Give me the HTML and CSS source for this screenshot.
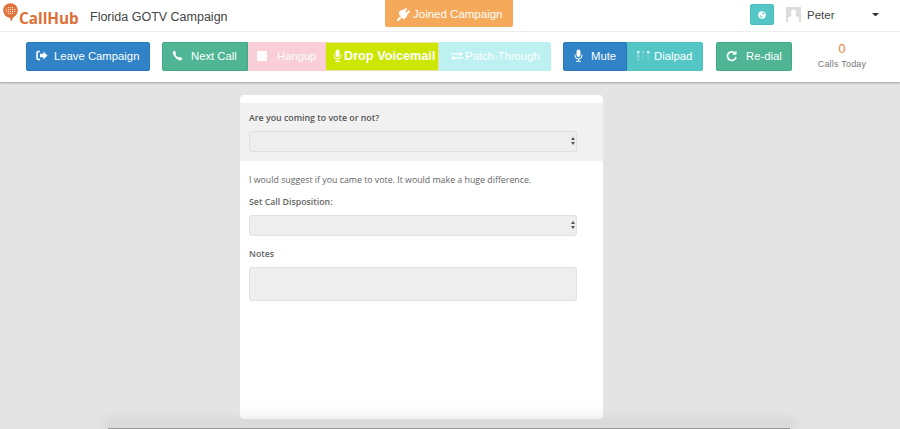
FILE: index.html
```html
<!DOCTYPE html>
<html lang="en">
<head>
<meta charset="utf-8">
<title>CallHub - Florida GOTV Campaign</title>
<link rel="stylesheet" href="styles.css">
</head>
<body>
<div class="top">
  <header class="header">
    <div class="brand">
      <div class="logo">
        <svg class="logo-mark" width="15" height="20" viewBox="0 0 15 20"><circle cx="7.500" cy="7.500" r="7.300" fill="#e0703a"/><path d="M5.500 13l5-1c-.3 2.500-1 5-2.800 6.800.4-2-.4-3.800-2.200-5.800z" fill="#e0703a"/><path d="M4 3.500h7v8H4zM2.800 5.500h9.400v4H2.800z" fill="#f7d5c0"/><path d="M2.500 5.500h10M2.500 7.500h10M2.500 9.500h10M4 3.500h7M4 11.500h7M4.500 3v9M6.500 2.500v10M8.500 2.500v10M10.500 3v9" stroke="#e0703a" stroke-width=".8" fill="none"/></svg>
        <span class="logo-text">CallHub</span>
      </div>
      <span class="campaign">Florida GOTV Campaign</span>
    </div>
    <div class="joined">
      <svg width="14" height="14" viewBox="0 0 14 14"><path d="M1 13l2.500-2.500M3 7l4 4 1.500-1.500c1-1 1-2.500.5-3.500L7 4C6 3.500 4.500 3.800 3.700 4.700L3 5.500zM6.500 4.500L9 2M9.500 7L12 4.500" stroke="#fff" stroke-width="2" fill="#fff" stroke-linecap="round"/></svg>
      Joined Campaign
    </div>
    <div class="account">
      <div class="globe"><svg width="8" height="8" viewBox="0 0 8 8"><circle cx="4" cy="4" r="3.800" fill="#fff"/><path d="M4.800 1.200l1.500.6-.4 1.700-1.500-.3zM2 4.200l1.500.4.600 1.800-1 .6z" fill="#55c6c6"/></svg></div>
      <div class="avatar"><svg width="15" height="15" viewBox="0 0 15 15"><rect width="15" height="15" fill="#dcdcdc"/><path d="M7.500 2.500a2.800 3.300 0 0 1 2.200 5.200c-.5.800-.2 1.300 1 1.800l2.300 1.100V15H2v-4.400l2.300-1.100c1.200-.5 1.500-1 1-1.800A2.800 3.300 0 0 1 7.500 2.500z" fill="#fff"/></svg></div>
      <span class="user">Peter</span>
      <span class="caret"></span>
    </div>
  </header>
  <nav class="toolbar">
    <button class="btn blue leave">
      <svg width="12" height="11" viewBox="0 0 12 11"><path d="M4 1.500H2.500A1.500 1.500 0 0 0 1 3v5a1.500 1.500 0 0 0 1.500 1.500H4" stroke="#fff" stroke-width="1.600" fill="none"/><path d="M4 3.800h3.500V1.500L11.500 5.500 7.500 9.500V7.200H4z" fill="#fff"/></svg>
      Leave Campaign
    </button>
    <div class="group">
      <button class="btn green next">
        <svg width="11" height="11" viewBox="0 0 11 11"><path d="M2.500.5L4.200 3 3.300 4.200c.5 1.300 1.400 2.200 3.300 3.400l1.100-.9L10.500 8.600 9 10.500C4.500 10 1 6 .7 2z" fill="#fff"/></svg>
        Next Call
      </button>
      <button class="btn pink hangup"><span class="stop"></span>Hangup</button>
      <button class="btn lime voicemail">
        <svg width="9" height="13" viewBox="0 0 9 13"><rect x="2.500" y="0.500" width="4" height="7.500" rx="2" fill="#fff"/><path d="M1 5.500v1a3.500 3.500 0 0 0 7 0v-1M4.500 10v2M2 12.300h5" stroke="#fff" stroke-width="1" fill="none"/></svg>
        Drop Voicemail
      </button>
      <button class="btn cyan patch">
        <svg width="12" height="10" viewBox="0 0 12 10"><path d="M0 2.300h8.500V.5L12 3 8.500 5V3.600H0zM12 6.400H3.500V5L0 7l3.500 2.500V7.700H12z" fill="#fff"/></svg>
        Patch-Through
      </button>
    </div>
    <div class="group">
      <button class="btn blue mute">
        <svg width="9" height="13" viewBox="0 0 9 13"><rect x="2.500" y="0.500" width="4" height="7.500" rx="2" fill="#fff"/><path d="M1 5.500v1a3.500 3.500 0 0 0 7 0v-1M4.500 10v2M2 12.300h5" stroke="#fff" stroke-width="1" fill="none"/></svg>
        Mute
      </button>
      <button class="btn teal dialpad">
        <svg width="13" height="10" viewBox="0 0 13 10" fill="#fff"><rect x="0" y="0" width="2.500" height="2.500" opacity=".75"/><rect x="5" y="0" width="2.500" height="2.500" opacity=".25"/><rect x="10" y="0" width="2.500" height="2.500" opacity=".75"/><rect x="0" y="3.700" width="2.500" height="2.500" opacity=".35"/><rect x="5" y="3.700" width="2.500" height="2.500" opacity=".1"/><rect x="10" y="3.700" width="2.500" height="2.500" opacity=".15"/><rect x="0" y="7.300" width="2.500" height="2.500" opacity=".2"/><rect x="5" y="7.300" width="2.500" height="2.500" opacity=".1"/><rect x="10" y="7.300" width="2.500" height="2.500" opacity=".15"/></svg>
        Dialpad
      </button>
    </div>
    <button class="btn green redial">
      <svg width="11" height="12" viewBox="0 0 11 12"><path d="M9 3.300A4.300 4.300 0 1 0 10 7" stroke="#fff" stroke-width="1.700" fill="none"/><path d="M10.500 0.500v4.300H6.200z" fill="#fff"/></svg>
      Re-dial
    </button>
    <div class="today">
      <span class="today-count">0</span>
      <span class="today-label">Calls Today</span>
    </div>
  </nav>
</div>
<main class="stage">
  <form class="card">
    <section class="shaded">
      <label class="label strong" for="vote">Are you coming to vote or not?</label>
      <div class="select-wrap">
        <select id="vote" class="field select"></select>
        <svg class="arrows" width="4" height="8" viewBox="0 0 4 8"><path d="M2 0L4 3H0zM2 8L0 5h4z" fill="#555"/></svg>
      </div>
    </section>
    <section class="plain">
      <p class="script">I would suggest if you came to vote. It would make a huge difference.</p>
      <label class="label disposition" for="disp">Set Call Disposition:</label>
      <div class="select-wrap">
        <select id="disp" class="field select"></select>
        <svg class="arrows" width="4" height="8" viewBox="0 0 4 8"><path d="M2 0L4 3H0zM2 8L0 5h4z" fill="#555"/></svg>
      </div>
      <label class="label notes-label" for="notes">Notes</label>
      <textarea id="notes" class="field notes"></textarea>
    </section>
  </form>
</main>
<div class="edge"></div>
</body>
</html>
```
FILE: styles.css
```css
* { box-sizing: border-box; }
html, body { margin: 0; height: 429px; overflow: hidden; }
body { background: #e4e4e4; font-family: "Liberation Sans", Arial, sans-serif; color: #555; position: relative; }

.top { background: #fff; box-shadow: 0 1px 2px rgba(0,0,0,.3); height: 82px; position: relative; }
.header { height: 32px; display: flex; border-bottom: 1px solid #eee; }
.brand { width: 385px; display: flex; align-items: center; height: 31px; padding-left: 3px; }
.logo { display: flex; align-items: flex-start; width: 87px; height: 31px; padding-top: 3px; }
.logo-text { font-family: "Open Sans", sans-serif; font-weight: 700; font-size: 15.300px; line-height: 20px; color: #dd6f37; margin: 5px 0 0 1px; }
.campaign { font-size: 12.500px; color: #444; position: relative; top: 1px; }
.joined { width: 128px; height: 27px; background: #f5a95a; border-radius: 0 0 2px 2px; color: #fff; font-size: 11.500px; display: flex; align-items: center; justify-content: flex-start; gap: 2px; padding-left: 12px; }
.account { flex: 1; display: flex; align-items: center; height: 29px; padding-left: 237px; }
.globe { width: 24px; height: 21px; background: #55c6c6; border: 1px solid #4dbcbc; border-radius: 2px; display: flex; align-items: center; justify-content: center; }
.avatar { margin-left: 12px; width: 15px; height: 15px; display: flex; }
.user { margin-left: 6px; font-size: 11.500px; color: #444; }
.caret { margin-left: 37px; border: 3px solid transparent; border-top: 3.500px solid #333; border-bottom: 0; width: 7px; height: 4px; }

.toolbar { display: flex; align-items: flex-start; padding: 10px 0 0 26px; }
.group { display: flex; margin-left: 12px; }
.btn { height: 29px; border: 1px solid transparent; padding: 0 0 2px; color: #fff; font-family: inherit; font-size: 11.300px; display: flex; align-items: center; justify-content: flex-start; white-space: nowrap; }
.btn svg { flex: none; }
.blue { background: #2f83c6; border-color: #2a7ab8; }
.green { background: #4fb594; border-color: #43a987; }
.pink { background: #f9ced6; border-color: #f9ced6; }
.lime { background: #cce600; border-color: #f0e0b0; }
.cyan { background: #bdf1f1; border-color: #bdf1f1; }
.teal { background: #55c6c6; border-color: #4fbfbf; }

.leave { width: 124px; padding-left: 9px; gap: 6px; border-radius: 2px; }
.next { width: 86px; padding-left: 9px; gap: 8px; border-radius: 2px 0 0 2px; }
.hangup { width: 78px; padding-left: 8px; gap: 10px; }
.voicemail { width: 113px; padding-left: 6px; gap: 2px; font-size: 12.700px; font-weight: 700; border-left-color: #cce600; }
.patch { width: 112px; padding-left: 11px; gap: 2px; border-radius: 0 2px 2px 0; }
.group + .group { margin-left: 12px; }
.mute { width: 64px; padding-left: 10px; gap: 8px; border-radius: 2px 0 0 2px; }
.dialpad { width: 76px; padding-left: 9px; gap: 4px; border-radius: 0 2px 2px 0; }
.redial { width: 76px; margin-left: 13px; padding-left: 9px; gap: 9px; border-radius: 2px; }
.stop { width: 10px; height: 10px; background: #fff; flex: none; }

.today { width: 100px; display: flex; flex-direction: column; align-items: center; }
.today-count { font-size: 12.500px; line-height: 14px; color: #ee7b3b; }
.today-label { font-size: 9px; line-height: 13px; color: #777; margin-top: 2px; letter-spacing: .2px; }

.stage { display: flex; justify-content: flex-start; padding: 12px 0 0 239px; }
.card { width: 365px; height: 326px; background: linear-gradient(#fff 300px, #fafafa); border: 1px solid #e6e6e6; border-radius: 5px; padding-top: 8px; font-family: "Open Sans", sans-serif; }
.shaded { background: #f1f1f1; height: 58px; padding: 9px 9px 0; }
.plain { padding: 13px 9px 0; }
.label { display: block; font-size: 8.800px; line-height: 13px; color: #444; }
.strong { font-weight: 600; margin-bottom: 6px; color: #555; }
.script { margin: 0 0 9px; font-size: 8.800px; line-height: 13px; color: #666; }
.disposition { font-weight: 600; margin-bottom: 6px; color: #666; }
.notes-label { font-weight: 600; margin-top: 12px; margin-bottom: 6px; color: #666; }
.select-wrap { position: relative; width: 328px; height: 21px; }
.field { display: block; width: 328px; background: #eee; border: 1px solid #e0e0e0; border-radius: 3px; margin: 0; outline: none; }
.select { height: 21px; appearance: none; }
.arrows { position: absolute; right: 2px; top: 6px; }
.notes { height: 34px; resize: none; }

.edge { position: absolute; left: 108px; right: 110px; bottom: 0; height: 1px; background: #999; box-shadow: 0 -4px 12px 5px rgba(0,0,0,.07); }
```
